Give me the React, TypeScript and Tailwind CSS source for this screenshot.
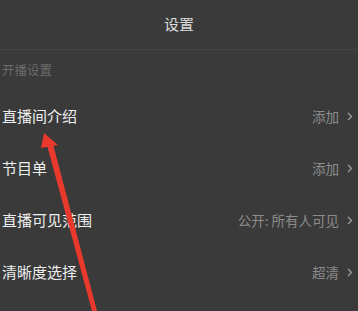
const rows = [
  { label: "直播间介绍", value: "添加" },
  { label: "节目单", value: "添加" },
  { label: "直播可见范围", value: "公开: 所有人可见" },
  { label: "清晰度选择", value: "超清" },
];

function Chevron() {
  return (
    <svg width="6" height="9" viewBox="0 0 6 9" className="ml-[8px]">
      <path d="M1 1 L4.5 4.5 L1 8" fill="none" stroke="#9a9a9a" strokeWidth="1.4" />
    </svg>
  );
}

export default function App() {
  return (
    <div
      className="relative h-[311px] w-[358px] overflow-hidden bg-[#3a3a3a]"
      style={{ fontFamily: '"Noto Sans CJK SC", "Noto Sans", sans-serif' }}
    >
      {/* Header */}
      <div className="flex h-[50px] items-center justify-center border-b border-[#444444]">
        <span className="text-[15px] text-[#dcdcdc]">设置</span>
      </div>

      {/* Section title */}
      <div className="flex h-[40px] items-center pl-[2px]">
        <span className="text-[12.5px] text-[#6c6c6c]">开播设置</span>
      </div>

      {/* Rows */}
      <div className="flex flex-col">
        {rows.map((row) => (
          <div key={row.label} className="flex h-[52px] items-center pl-[2px] pr-[5px]">
            <span className="flex-1 text-[15px] text-[#eeeeee]">{row.label}</span>
            <span className="text-[13.5px] text-[#8c8c8c]">{row.value}</span>
            <Chevron />
          </div>
        ))}
      </div>

      {/* Red annotation arrow */}
      <svg className="pointer-events-none absolute inset-0" width="358" height="311" viewBox="0 0 358 311">
        <polygon points="44,133 58,145 41,148" fill="#e8392c" />
        <polygon points="47,145 53,144 97,311 92,311" fill="#e8392c" />
      </svg>
    </div>
  );
}
